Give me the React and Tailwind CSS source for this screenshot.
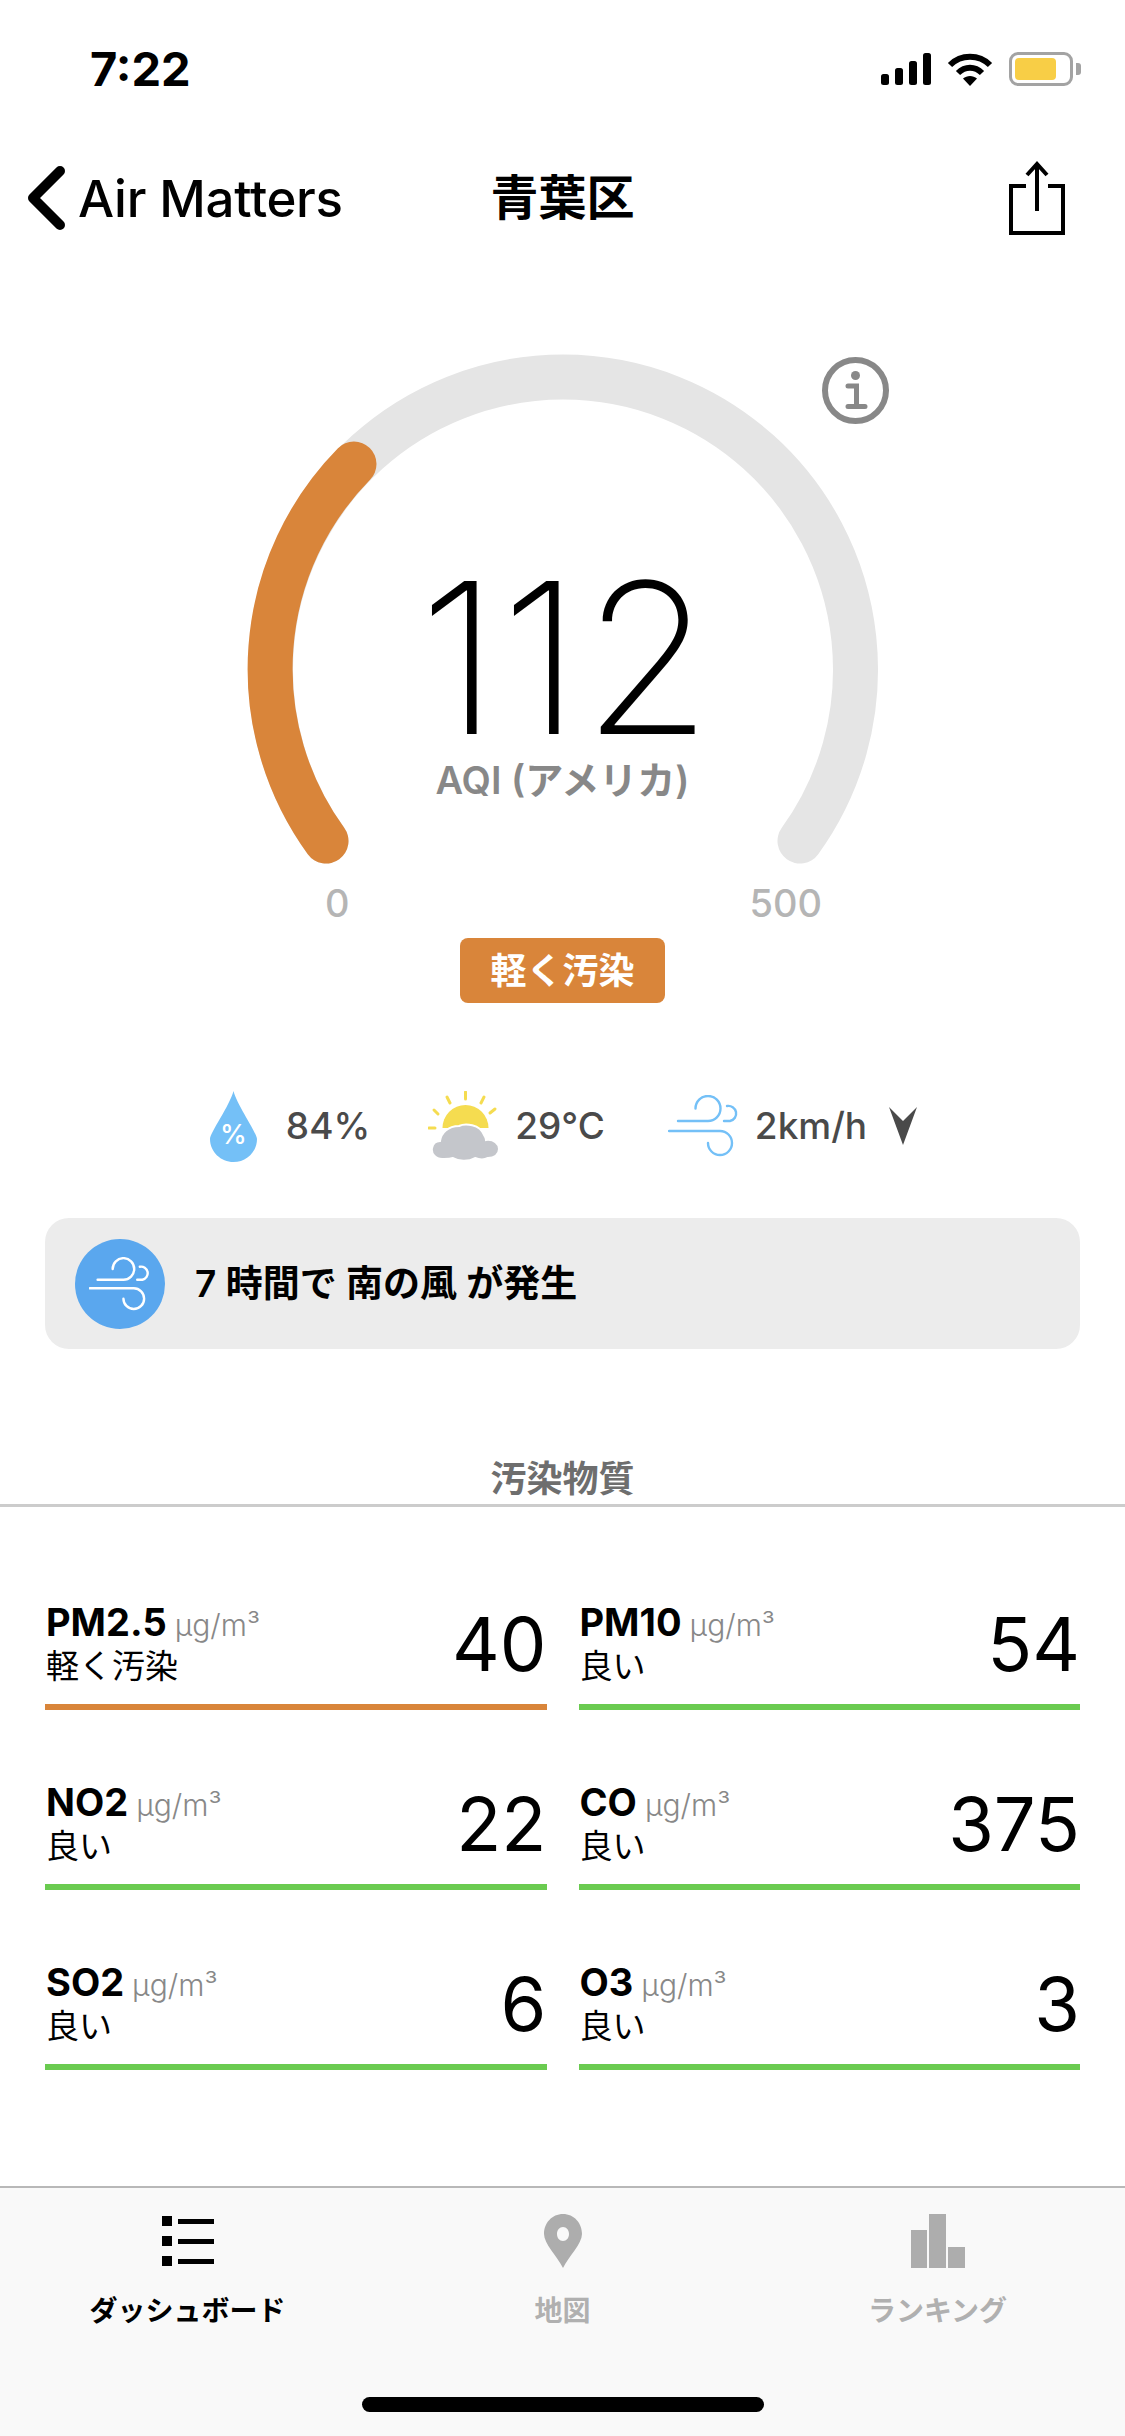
const sans = "font-['Inter','Noto_Sans_CJK_JP',sans-serif]"

const pollutants = [
  { name: "PM2.5", status: "軽く汚染", value: "40", bar: "bg-[#d9853a]" },
  { name: "PM10", status: "良い", value: "54", bar: "bg-[#6acb50]" },
  { name: "NO2", status: "良い", value: "22", bar: "bg-[#6acb50]" },
  { name: "CO", status: "良い", value: "375", bar: "bg-[#6acb50]" },
  { name: "SO2", status: "良い", value: "6", bar: "bg-[#6acb50]" },
  { name: "O3", status: "良い", value: "3", bar: "bg-[#6acb50]" },
]

function WindIcon({ className, color, strokeWidth = 2.4 }) {
  return (
    <svg viewBox="0 0 72 62" className={className} fill="none" stroke={color} strokeWidth={strokeWidth} strokeLinecap="round">
      <path d="M10 26 H40 A12.5 12.5 0 1 0 27.5 13.5" />
      <path d="M1 36 H52 A12 12 0 1 1 40 48" />
      <path d="M59 11 A7.5 7.5 0 0 1 62 26 H56" />
    </svg>
  )
}

function StatusIcons() {
  return (
    <div className="flex items-center">
      <svg viewBox="0 0 51 32" className="w-[51px] h-[32px]" fill="#000">
        <rect x="0" y="21" width="8" height="11" rx="2.5" />
        <rect x="14" y="15" width="8" height="17" rx="2.5" />
        <rect x="28" y="8" width="8" height="24" rx="2.5" />
        <rect x="42" y="0" width="8" height="32" rx="2.5" />
      </svg>
      <svg viewBox="0 0 46 33" className="w-[46px] h-[33px] ml-[15px]" fill="none" stroke="#000" strokeWidth="6">
        <path d="M3 12 C14 1 32 1 43 12" />
        <path d="M11 20 C18 13 28 13 35 20" />
        <path d="M23 33 L16 25.5 C20 22 26 22 30 25.5 Z" fill="#000" stroke="none" />
      </svg>
      <div className="relative w-[64px] h-[34px] ml-[16px] rounded-[9px] border-[3px] border-[#a3a3a3] p-[3px]">
        <div className="w-[41px] h-full rounded-[4px] bg-[#f8ce46]" />
        <div className="absolute -right-[11px] top-[8px] w-[5px] h-[12px] rounded-r-[3px] bg-[#a3a3a3]" />
      </div>
    </div>
  )
}

function NavBar() {
  return (
    <div className="grid grid-cols-3 items-center h-[116px] px-[27px]">
      <div className="flex items-center">
        <svg viewBox="0 0 38 64" className="w-[38px] h-[64px]" fill="none" stroke="#000" strokeWidth="10" strokeLinecap="round" strokeLinejoin="round">
          <path d="M33 5 L6 32 L33 59" />
        </svg>
        <span className="ml-[13px] text-[51px] leading-none font-medium text-black tracking-[-0.3px] whitespace-nowrap">Air Matters</span>
      </div>
      <div className="text-center text-[48px] leading-none font-bold text-black">青葉区</div>
      <div className="flex justify-end pr-[33px]">
        <svg viewBox="0 0 56 74" className="w-[56px] h-[74px]" fill="none" stroke="#000" strokeWidth="4">
          <path d="M17 25 H2 V72 H54 V25 H39" />
          <path d="M28 50 V3" />
          <path d="M18 14 L28 3 L38 14" />
        </svg>
      </div>
    </div>
  )
}

function Gauge() {
  return (
    <div className="relative w-[632px] h-[512px] mx-auto mt-[98px]">
      <svg viewBox="0 0 632 512" className="block w-[632px] h-[512px]" fill="none" strokeWidth="45" strokeLinecap="round">
        <path d="M79 487 A292.5 292.5 0 1 1 553 487" stroke="#e5e5e5" />
        <path d="M79 487 A292.5 292.5 0 0 1 107 110" stroke="#d9853a" />
      </svg>
      <svg viewBox="0 0 67 67" className="absolute left-[575px] top-[3px] w-[67px] h-[67px]" fill="none">
        <circle cx="33.5" cy="33.5" r="30.5" stroke="#888" strokeWidth="6" />
        <circle cx="33.5" cy="18.5" r="4.5" fill="#888" />
        <path d="M26 29 H34.5 V49 M26 49.5 H43" stroke="#888" strokeWidth="5" strokeLinecap="round" />
      </svg>
      <div className="absolute inset-x-0 top-[204px] flex flex-col items-center">
        <div className="h-[200px] pl-[8px] text-[210px] leading-[200px] font-extralight text-black tracking-[2px]">112</div>
        <div className="text-[38px] leading-[44px] font-semibold text-[#888]">AQI (アメリカ)</div>
      </div>
    </div>
  )
}

function WeatherRow() {
  return (
    <div className="flex items-center justify-center mt-[87px] h-[72px] pl-[2px] text-[37px] font-medium text-[#4a4a4a]">
      <svg viewBox="0 0 47 71" className="w-[47px] h-[71px]">
        <path d="M23.5 0 C27 14 47 42 47 48 C47 61 36 71 23.5 71 C11 71 0 61 0 48 C0 42 20 14 23.5 0 Z" fill="#74c0f7" />
        <text x="23.5" y="53" textAnchor="middle" fontSize="27" fontFamily="Inter" fill="#fff">%</text>
      </svg>
      <span className="ml-[29px]">84%</span>
      <svg viewBox="0 0 72 70" className="w-[72px] h-[70px] ml-[58px]">
        <path d="M14.5 37 A23 23 0 0 1 60.5 37 Z" fill="#f5dc50" />
        <g stroke="#f5dc50" strokeWidth="3" strokeLinecap="round">
          <path d="M37.5 1 V8" />
          <path d="M19 6 L22 12" />
          <path d="M56 6 L53 12" />
          <path d="M6 19 L10 23" />
          <path d="M67 18 L62 22" />
          <path d="M1 37 H7" />
        </g>
        <path d="M16 68 C7 69 3 62 4 57 C5 52 9 50 12 50 C13 42 20 35 31 35 C37 32 52 33 56 44 C58 47 58 48 58 49 C66 48 71 53 71 58 C71 64 66 67 60 67 C56 69 52 69 47 67 C40 71 30 70 25 67 C22 68 19 68 16 68 Z" fill="#c4c6cb" stroke="#fff" strokeWidth="2" />
      </svg>
      <span className="ml-[15px]">29°C</span>
      <WindIcon className="w-[72px] h-[62px] ml-[63px]" color="#74c0f7" />
      <span className="ml-[15px]">2km/h</span>
      <svg viewBox="0 0 28 38" className="w-[28px] h-[38px] ml-[22px]" fill="#4a4a4a">
        <polygon points="0,0 14,14 28,0 14,38" />
      </svg>
    </div>
  )
}

function PollutantCell({ item }) {
  return (
    <div>
      <div className="flex items-end justify-between h-[84px] pl-[1px]">
        <div className="flex flex-col">
          <div className="flex items-baseline">
            <span className="text-[38px] leading-[44px] font-bold text-black">{item.name}</span>
            <span className="ml-[8px] text-[30px] leading-[44px] font-light text-[#888]">µg/m³</span>
          </div>
          <span className="text-[33px] leading-[38px] text-black">{item.status}</span>
        </div>
        <span className="text-[74px] leading-[82px] font-normal text-black">{item.value}</span>
      </div>
      <div className={`h-[6px] mt-[19px] ${item.bar}`} />
    </div>
  )
}

function TabItem({ label, active, children }) {
  return (
    <div className="flex flex-col items-center">
      <div className="h-[56px] flex items-center justify-center">{children}</div>
      <span className={`mt-[25px] text-[28px] leading-[34px] font-semibold ${active ? "text-black" : "text-[#b0b0b0]"}`}>{label}</span>
    </div>
  )
}

function TabBar() {
  return (
    <div className="flex-1 flex flex-col border-t-2 border-[#b8b8b8] bg-[#f9f9f9]">
      <div className="grid grid-cols-3 pt-[25px]">
        <TabItem label="ダッシュボード" active>
          <svg viewBox="0 0 52 50" className="w-[52px] h-[50px]" fill="#000">
            <rect x="0" y="0" width="10" height="10" />
            <rect x="16" y="3" width="36" height="5" />
            <rect x="0" y="20" width="10" height="10" />
            <rect x="16" y="23" width="36" height="5" />
            <rect x="0" y="40" width="10" height="10" />
            <rect x="16" y="43" width="36" height="5" />
          </svg>
        </TabItem>
        <TabItem label="地図">
          <svg viewBox="0 0 38 54" className="w-[38px] h-[54px]">
            <path fillRule="evenodd" d="M19 0 C30 0 38 9 38 20 C38 30 25 42 19 54 C13 42 0 30 0 20 C0 9 8 0 19 0 Z M19 13 C15.5 13 13 16 13 20 C13 24 15.5 27 19 27 C22.5 27 25 24 25 20 C25 16 22.5 13 19 13 Z" fill="#adadad" />
          </svg>
        </TabItem>
        <TabItem label="ランキング">
          <svg viewBox="0 0 54 54" className="w-[54px] h-[54px]" fill="#adadad">
            <rect x="0" y="16" width="16" height="38" />
            <rect x="18" y="0" width="17" height="54" />
            <rect x="37" y="33" width="17" height="21" />
          </svg>
        </TabItem>
      </div>
      <div className="mt-auto mb-[24px] mx-auto w-[402px] h-[15px] rounded-full bg-black" />
    </div>
  )
}

export default function App() {
  return (
    <div className={`w-[1125px] h-[2436px] flex flex-col bg-white overflow-hidden ${sans}`}>
      <div className="flex items-start justify-between h-[140px] pt-[42px] pl-[90px] pr-[52px]">
        <span className="text-[47px] leading-[54px] font-bold text-black">7:22</span>
        <div className="pt-[10px]">
          <StatusIcons />
        </div>
      </div>
      <NavBar />

      <Gauge />
      <div className="flex justify-between w-[497px] ml-[325px] mt-[16px] text-[38px] leading-[42px] font-medium text-[#b5b5b5]">
        <span>0</span>
        <span>500</span>
      </div>
      <div className="self-center flex items-center justify-center w-[205px] h-[65px] mt-[14px] rounded-[8px] bg-[#d9853a] text-[36px] font-semibold text-white">軽く汚染</div>

      <WeatherRow />

      <div className="flex items-center h-[131px] mx-[45px] mt-[56px] pl-[30px] rounded-[24px] bg-[#ececec]">
        <div className="flex items-center justify-center w-[90px] h-[90px] rounded-full bg-[#5aa7ee]">
          <WindIcon className="w-[62px] h-[54px]" color="#fff" strokeWidth="2.8" />
        </div>
        <span className="ml-[30px] text-[37px] font-semibold text-black">7 時間で 南の風 が発生</span>
      </div>

      <div className="mt-[106px] text-center text-[36px] leading-[48px] font-semibold text-[#6e6e6e]">汚染物質</div>
      <div className="h-[3px] mt-[1px] bg-[#cccccc]" />

      <div className="grid grid-cols-2 gap-x-[32px] gap-y-[71px] px-[45px] mt-[94px]">
        {pollutants.map((item) => (
          <PollutantCell key={item.name} item={item} />
        ))}
      </div>

      <div className="mt-[116px] flex-1 flex flex-col">
        <TabBar />
      </div>
    </div>
  )
}
